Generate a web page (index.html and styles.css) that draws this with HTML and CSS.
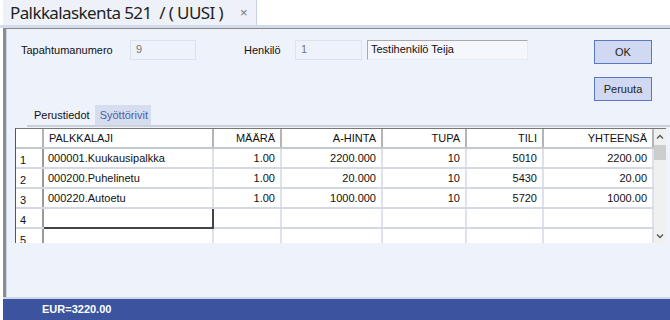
FILE: index.html
```html
<!DOCTYPE HTML>
<html lang="fi">
<head>
	<meta charset="utf-8">
	<link rel="stylesheet" href="styles.css">
</head>
<body>
	<div class="tabbar">
		<div class="doctab">
			<span class="doctitle">Palkkalaskenta 521&nbsp; / ( UUSI )</span>
			<span class="close">&#215;</span>
		</div>
	</div>
	<div class="window">
		<div class="panel">
			<div class="head">
				<div class="fields">
					<span class="lbl lbl-nro">Tapahtumanumero</span>
					<span class="inp inp-nro">9</span>
					<span class="lbl lbl-hlo">Henkilö</span>
					<span class="inp inp-hlo">1</span>
					<span class="inp inp-name">Testihenkilö Teija</span>
				</div>
				<div class="buttons">
					<a href="javascript:;" class="btn">OK</a>
					<a href="javascript:;" class="btn">Peruuta</a>
				</div>
			</div>
			<div class="tabs">
				<span class="tab">Perustiedot</span>
				<span class="tab on">Syöttörivit</span>
			</div>
			<div class="grid">
				<table class="rows">
					<colgroup>
						<col style="width:27px"><col style="width:170px"><col style="width:68px"><col style="width:101px"><col style="width:84px"><col style="width:77px"><col style="width:110px">
					</colgroup>
					<tr class="hdr">
						<th></th><th class="left">PALKKALAJI</th><th>MÄÄRÄ</th><th>A-HINTA</th><th>TUPA</th><th>TILI</th><th>YHTEENSÄ</th>
					</tr>
					<tr><td class="no">1</td><td class="left">000001.Kuukausipalkka</td><td>1.00</td><td>2200.000</td><td>10</td><td>5010</td><td>2200.00</td></tr>
					<tr><td class="no">2</td><td class="left">000200.Puhelinetu</td><td>1.00</td><td>20.000</td><td>10</td><td>5430</td><td>20.00</td></tr>
					<tr><td class="no">3</td><td class="left">000220.Autoetu</td><td>1.00</td><td>1000.000</td><td>10</td><td>5720</td><td>1000.00</td></tr>
					<tr><td class="no">4</td><td class="left focus"></td><td></td><td></td><td></td><td></td><td></td></tr>
					<tr><td class="no">5</td><td class="left"></td><td></td><td></td><td></td><td></td><td></td></tr>
				</table>
				<div class="scroll">
					<span class="arr up"><svg width="8" height="5" viewBox="0 0 8 5"><path d="M1 4.5 L4 1.5 L7 4.5" fill="none" stroke="#555" stroke-width="1.3"/></svg></span>
					<span class="thumb"></span>
					<span class="arr down"><svg width="8" height="5" viewBox="0 0 8 5"><path d="M1 0.5 L4 3.5 L7 0.5" fill="none" stroke="#555" stroke-width="1.3"/></svg></span>
				</div>
			</div>
		</div>
		<div class="footer">EUR=3220.00</div>
	</div>
</body>
</html>
```

FILE: styles.css
```css
*{padding:0;margin:0;box-sizing:border-box;text-decoration:none;}
body{background:#fff;font-family:"Liberation Sans",Arial,sans-serif;font-size:11px;color:#111;width:670px;height:320px;overflow:hidden;}
.tabbar{height:28px;padding-left:3px;display:flex;border-bottom:3px solid #d3dcec;}
.doctab{width:254px;height:25px;background:#eef1f8;border-right:1px solid #c8d2e6;display:flex;align-items:center;padding-left:7px;white-space:nowrap;}
.doctitle{font-family:"Noto Sans","Open Sans",sans-serif;font-size:17px;color:#1e1e1e;letter-spacing:-0.6px;line-height:25px;white-space:nowrap;}
.close{margin-left:17px;font-size:13px;color:#777;}
.window{margin-left:3px;height:292px;display:flex;flex-direction:column;}
.panel{flex:1;background:#eef2fa;border-top:1px solid #8a8a8a;border-left:3px solid #8c8c8c;box-shadow:inset 1px 0 0 #c9d2e4;display:flex;flex-direction:column;}
.head{height:77px;display:flex;justify-content:space-between;padding:11px 18px 0 15px;}
.fields{display:flex;align-items:flex-start;}
.lbl{line-height:20px;color:#111;}
.inp{height:20px;line-height:17px;padding-left:5px;border:1px solid #dde3ee;color:#777;}
.lbl-nro{width:109px;}
.inp-nro{width:66px;}
.lbl-hlo{margin-left:48px;width:51px;}
.inp-hlo{width:67px;}
.inp-name{width:161px;margin-left:5px;color:#111;background:#f5f7fc;border-color:#aaa #e6eaf3 #e6eaf3 #aaa;padding-left:3px;}
.buttons{display:flex;flex-direction:column;gap:13px;}
.btn{display:block;width:58px;height:24px;line-height:22px;text-align:center;background:#d0d9f1;border:1px solid #5a78c2;color:#222;}
.tabs{margin-left:21px;height:21px;display:flex;align-items:flex-end;border-bottom:2px solid #cdd1da;}
.tab{height:20px;line-height:20px;padding:0 5px 0 7px;color:#111;}
.tab.on{background:#d6ddef;color:#4b5ea6;padding:0 3px 0 5px;}
.grid{margin:1px 0 0 9px;width:651px;height:115px;display:flex;overflow:hidden;background:#fff;border-top:1px solid #777;border-left:1px solid #555;}
.rows{border-collapse:collapse;table-layout:fixed;width:637px;align-self:flex-start;}
.rows th,.rows td{height:20px;padding:0 5px 0 4px;text-align:right;white-space:nowrap;overflow:hidden;font-size:11px;color:#111;}
.rows th{font-weight:normal;height:19px;border-right:2px solid #b4b4b4;border-bottom:2px solid #c4c8d0;}
.rows td{border-right:2px solid #dde1ea;border-bottom:2px solid #d3d8e3;}
.rows .left{text-align:left;}
.rows th.left{padding-left:5px;}
.rows td.no{text-align:left;padding-left:4px;padding-top:4px;border-right:2px solid #9a9a9a;}
.rows td.focus{border:2px solid #444;}
.scroll{width:14px;background:#f0f0f0;display:flex;flex-direction:column;align-items:center;}
.arr{height:14px;display:flex;align-items:center;justify-content:center;}
.thumb{width:12px;height:15px;background:#cdcdcd;margin-top:2px;}
.arr.down{margin-top:auto;}
.footer{height:23px;background:#3c53a0;border-top:2px solid #cfd6e6;color:#fff;font-weight:bold;padding-left:39px;line-height:21px;font-size:11px;}
```
